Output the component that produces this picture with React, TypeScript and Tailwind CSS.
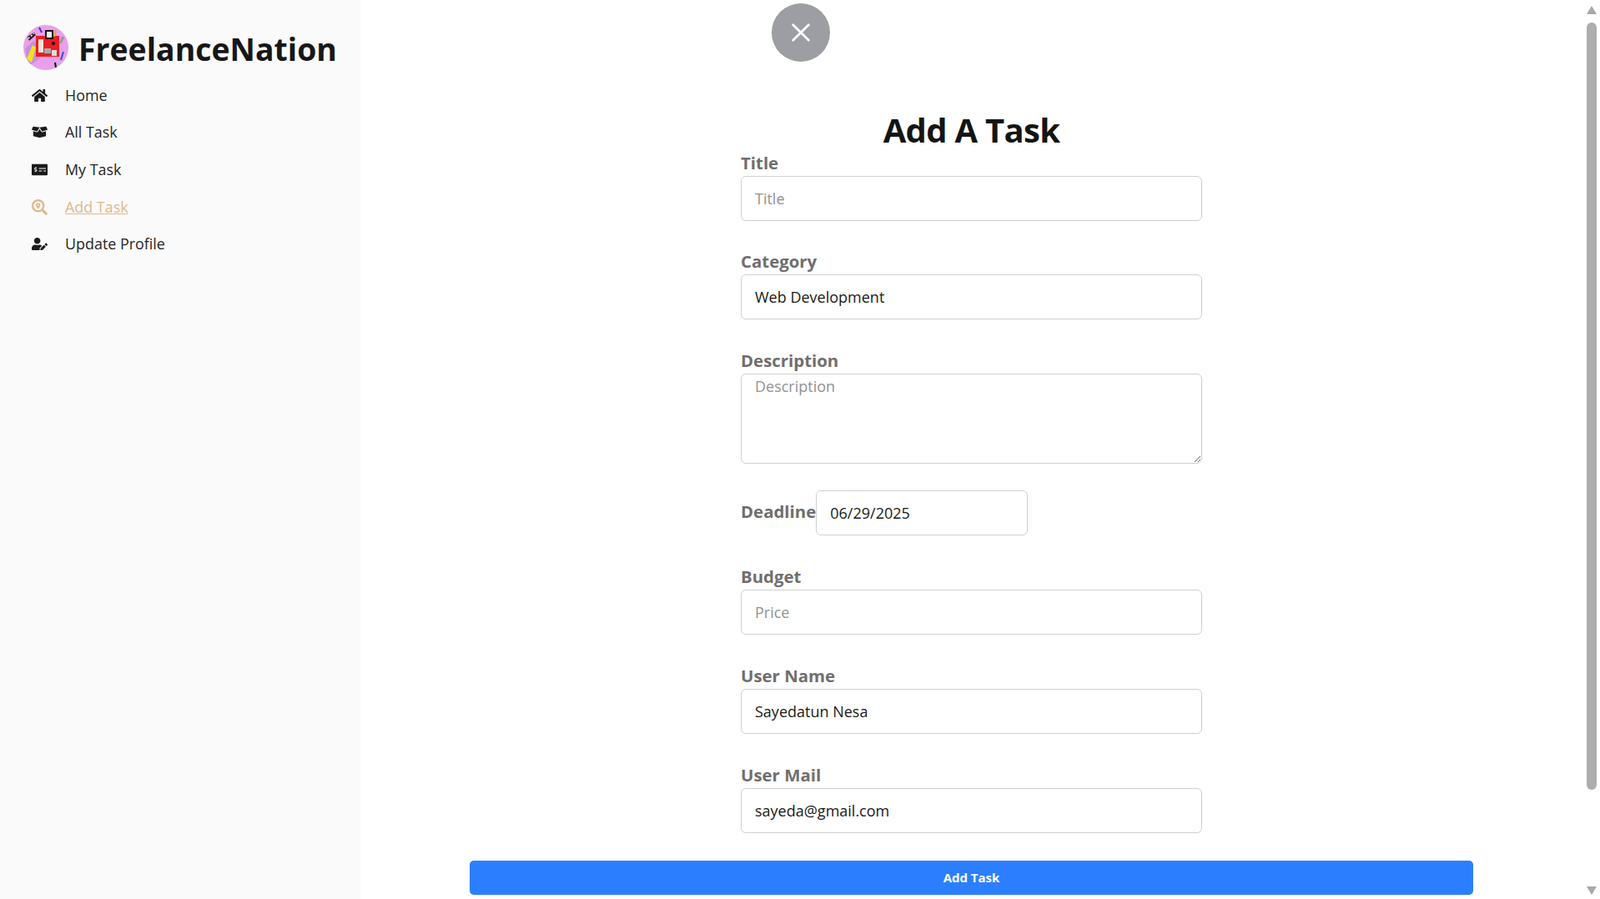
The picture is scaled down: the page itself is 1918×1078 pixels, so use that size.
import React from 'react';
import { FaBoxOpen, FaHome, FaMoneyCheckAlt, FaSearchLocation, FaUserEdit } from 'react-icons/fa';

const navItems = [
  { label: 'Home', icon: FaHome },
  { label: 'All Task', icon: FaBoxOpen },
  { label: 'My Task', icon: FaMoneyCheckAlt },
  { label: 'Add Task', icon: FaSearchLocation, active: true },
  { label: 'Update Profile', icon: FaUserEdit },
];

const inputClass =
  'block h-[54px] w-full rounded-[6px] border border-[#cfcfcf] bg-white px-4 text-[18px] text-[#1a1a1a] placeholder:text-[#929292] outline-none';
const labelClass = 'block h-[28px] text-[20.4px] leading-[24px] font-bold text-[#6f6e6e]';

function Logo() {
  return (
    <svg viewBox="0 0 54 54" className="h-[54px] w-[54px] shrink-0">
      <defs>
        <clipPath id="logo-clip">
          <circle cx="27" cy="27" r="27" />
        </clipPath>
      </defs>
      <g clipPath="url(#logo-clip)">
        <rect width="54" height="54" fill="#e9a0ea" />
        <path d="M2 28 L14 18 L20 40 L6 50 Z" fill="#c48fe0" />
        <path d="M5 14 L13 9 L15 12 L7 19 Z" fill="#222" />
        <path d="M6 16 L13 10" stroke="#fff" strokeWidth="1.5" strokeDasharray="2 2" />
        <path d="M4 41 L11 24 L15 27 L10 45 Z" fill="#f3e21a" />
        <rect x="15" y="13" width="28" height="25" fill="#ea1c24" />
        <rect x="26" y="6" width="10" height="11" fill="#111" />
        <rect x="28" y="8" width="6" height="7" fill="#eee" />
        <rect x="18" y="17" width="6" height="16" fill="#f2e4d2" />
        <rect x="25" y="28" width="8" height="6" fill="#aaa" />
        <rect x="34" y="30" width="6" height="7" fill="#ddd" />
        <circle cx="36" cy="22" r="2" fill="#111" />
        <path d="M19 3 L22 9" stroke="#3a3ad0" strokeWidth="2" />
        <path d="M39 6 L37 14" stroke="#d9a54a" strokeWidth="2" />
        <path d="M48 14 L44 22" stroke="#9a9a9a" strokeWidth="3" />
        <path d="M48 32 L45 42" stroke="#3b4fd0" strokeWidth="2" />
        <path d="M38 45 L39 51" stroke="#111" strokeWidth="2" />
      </g>
    </svg>
  );
}

function Sidebar() {
  return (
    <aside className="h-full w-[432px] shrink-0 bg-[#fafafa] pt-[30px]">
      <div className="flex items-start gap-[12px] pl-[28px]">
        <Logo />
        <h1 className="pt-[2px] text-[37.4px] leading-[54px] font-bold text-[#171717]">FreelanceNation</h1>
      </div>
      <nav className="mt-[6px] pl-[38px]">
        {navItems.map((item) => (
          <a
            key={item.label}
            className={`flex h-[44.6px] items-center gap-[20px] text-[17.9px] ${
              item.active ? 'text-[#dfb98c] underline' : 'text-[#262626]'
            }`}
          >
            <span className="flex w-[20px] justify-start">
              <item.icon className={item.active ? 'h-[19px] w-[19px] text-[#dfb98c]' : 'h-[19px] w-[19px] text-[#1a1a1a]'} />
            </span>
            {item.label}
          </a>
        ))}
      </nav>
    </aside>
  );
}

function Field({ label, placeholder, value, gap }: { label: string; placeholder?: string; value?: string; gap: string }) {
  return (
    <div className={gap}>
      <label className={labelClass}>{label}</label>
      <input className={inputClass} placeholder={placeholder} defaultValue={value} />
    </div>
  );
}

function Scrollbar() {
  return (
    <div className="flex h-full w-[21px] shrink-0 flex-col items-center bg-white pt-[7px] pb-[5px]">
      <div className="h-0 w-0 border-x-[6px] border-b-[10px] border-x-transparent border-b-[#a8a8a8]" />
      <div className="mt-[10px] h-[920px] w-[12px] rounded-[6px] bg-[#adadad]" />
      <div className="mt-auto h-0 w-0 border-x-[6px] border-t-[10px] border-x-transparent border-t-[#a8a8a8]" />
    </div>
  );
}

export default function App() {
  return (
    <div className="flex h-screen overflow-hidden bg-white" style={{ fontFamily: '"Open Sans", sans-serif' }}>
      <Sidebar />
      <main className="flex h-full flex-1 flex-col items-center">
        <div className="mt-[4px] w-[553px] pl-[37px]">
          <button className="flex h-[70px] w-[70px] items-center justify-center rounded-full bg-[#9c9ea3]">
            <svg viewBox="0 0 24 24" className="h-[28px] w-[28px]" fill="none" stroke="#fff" strokeWidth="2.4" strokeLinecap="round">
              <path d="M4 4 L20 20 M20 4 L4 20" />
            </svg>
          </button>
        </div>
        <h2 className="mt-[55px] text-[40px] leading-[54px] font-bold tracking-[-0.7px] text-[#141414]">Add A Task</h2>
        <form className="w-[553px]">
          <Field gap="mt-0" label="Title" placeholder="Title" />
          <Field gap="mt-[36px]" label="Category" value="Web Development" />
          <div className="mt-[37px]">
            <label className={labelClass}>Description</label>
            <textarea
              className="block h-[108px] w-full rounded-[6px] border border-[#cfcfcf] bg-white px-4 py-px text-[18px] text-[#1a1a1a] outline-none placeholder:text-[#929292]"
              placeholder="Description"
            />
          </div>
          <div className="mt-[32px] flex items-center">
            <label className="pb-[4px] text-[20.4px] leading-[28px] font-bold text-[#6f6e6e]">Deadline</label>
            <input className={`${inputClass} !w-[254px]`} defaultValue="06/29/2025" />
          </div>
          <Field gap="mt-[37px]" label="Budget" placeholder="Price" />
          <Field gap="mt-[37px]" label="User Name" value="Sayedatun Nesa" />
          <Field gap="mt-[37px]" label="User Mail" value="sayeda@gmail.com" />
        </form>
        <button className="mt-[33px] h-[41px] w-[1203px] rounded-[5px] bg-[#2b7fff] text-[15px] font-bold text-white">
          Add Task
        </button>
      </main>
      <Scrollbar />
    </div>
  );
}
